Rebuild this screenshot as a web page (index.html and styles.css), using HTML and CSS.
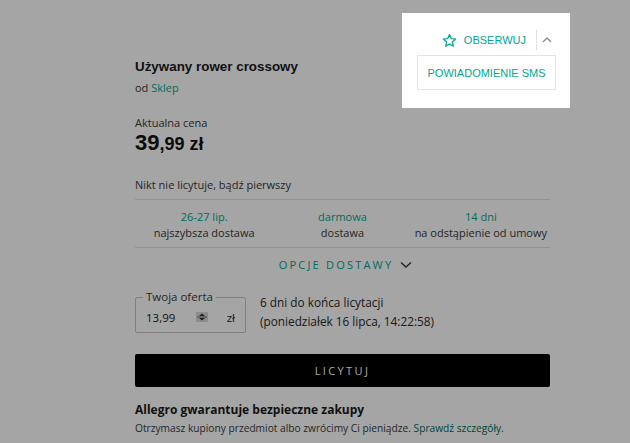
FILE: index.html
```html
<!DOCTYPE html>
<html lang="pl">
<head>
<meta charset="utf-8">
<title>Używany rower crossowy</title>
<link rel="stylesheet" href="styles.css">
</head>
<body>
<main class="offer-page">
  <h1 class="title">Używany rower crossowy</h1>
  <div class="seller">od <a class="link" href="#">Sklep</a></div>

  <div class="price-label">Aktualna cena</div>
  <div class="price"><span class="price-int">39</span><span class="price-frac">,99 zł</span></div>

  <div class="bidders">Nikt nie licytuje, bądź pierwszy</div>

  <div class="facts">
    <div class="fact"><div class="fact-top">26-27 lip.</div><div class="fact-bottom">najszybsza dostawa</div></div>
    <div class="fact"><div class="fact-top">darmowa</div><div class="fact-bottom">dostawa</div></div>
    <div class="fact"><div class="fact-top">14 dni</div><div class="fact-bottom">na odstąpienie od umowy</div></div>
  </div>

  <div class="delivery-options">
    <span>OPCJE DOSTAWY</span>
    <svg class="chev-down" width="12" height="8" viewBox="0 0 12 8"><path d="M1 1.5 L6 6 L11 1.5" fill="none" stroke="currentColor" stroke-width="1.5"/></svg>
  </div>

  <div class="bid-row">
    <div class="bid-box">
      <span class="bid-legend">Twoja oferta</span>
      <span class="bid-value">13,99</span>
      <span class="spinner"><svg width="12" height="10" viewBox="0 0 12 10"><rect x="0" y="0" width="12" height="10" fill="#d8d8d8"/><path d="M3 4 L6 1.5 L9 4 Z M3 6 L6 8.5 L9 6 Z" fill="#333"/><rect x="1" y="4.6" width="10" height="0.8" fill="#555"/></svg></span>
      <span class="bid-cur">zł</span>
    </div>
    <div class="bid-time">6 dni do końca licytacji<br>(poniedziałek 16 lipca, 14:22:58)</div>
  </div>

  <button class="bid-btn">LICYTUJ</button>

  <div class="guarantee-title">Allegro gwarantuje bezpieczne zakupy</div>
  <div class="guarantee-text">Otrzymasz kupiony przedmiot albo zwrócimy Ci pieniądze. <a class="link-dark" href="#">Sprawdź szczegóły.</a></div>
</main>

<div class="overlay"></div>

<div class="popup">
  <div class="popup-head">
    <svg class="star" width="15" height="15" viewBox="0 0 24 24"><path d="M12 2.5 L14.9 8.9 L21.8 9.6 L16.6 14.3 L18.1 21.2 L12 17.6 L5.9 21.2 L7.4 14.3 L2.2 9.6 L9.1 8.9 Z" fill="none" stroke="currentColor" stroke-width="2" stroke-linejoin="round"/></svg>
    <span class="watch">OBSERWUJ</span>
    <span class="divider"></span>
    <svg class="chev-up" width="10" height="6" viewBox="0 0 10 6"><path d="M1 5 L5 1 L9 5" fill="none" stroke="currentColor" stroke-width="1.3"/></svg>
  </div>
  <div class="sms">POWIADOMIENIE SMS</div>
</div>
</body>
</html>
```
FILE: styles.css
```css
* { box-sizing: border-box; }
html, body { margin: 0; padding: 0; background: #fff; }
body {
  width: 630px;
  height: 443px;
  overflow: hidden;
  font-family: "Open Sans", "Liberation Sans", sans-serif;
  color: #3a3a3a;
  position: relative;
}
.offer-page {
  margin-left: 135px;
  width: 415px;
  padding-top: 58px;
}
.title {
  margin: 0;
  font-family: "Liberation Sans", Arial, sans-serif;
  font-weight: 700;
  font-size: 13.4px;
  line-height: 18px;
  color: #1a1a1a;
}
.seller {
  margin-top: 4px;
  font-size: 11px;
  line-height: 16px;
  color: #3a3a3a;
}
.link { color: #00a790; text-decoration: none; }
.link-dark { color: #006b5a; text-decoration: none; }
.price-label {
  margin-top: 19px;
  font-size: 11px;
  line-height: 16px;
  color: #3a3a3a;
}
.price {
  font-family: "Liberation Sans", Arial, sans-serif;
  font-weight: 700;
  line-height: 24px;
  color: #111;
}
.price-int { font-size: 22px; }
.price-frac { font-size: 18px; }
.bidders {
  margin-top: 20px;
  font-size: 11px;
  line-height: 16px;
  padding-bottom: 6px;
  border-bottom: 1px solid #e4e4e4;
}
.facts {
  display: grid;
  grid-template-columns: 1fr 1fr 1fr;
  padding: 9px 0 6px;
  border-bottom: 1px solid #e4e4e4;
  text-align: center;
  font-size: 11px;
  line-height: 16px;
}
.fact-top { color: #00a790; }
.fact-bottom { color: #3a3a3a; }
.delivery-options {
  margin-top: 9px;
  display: flex;
  justify-content: center;
  align-items: center;
  gap: 7px;
  font-size: 11px;
  line-height: 16px;
  letter-spacing: 2.2px;
  color: #00a790;
  padding-left: 6px;
}
.chev-down { color: #3a3a3a; }
.bid-row {
  margin-top: 20px;
  display: flex;
  align-items: flex-start;
  gap: 14px;
}
.bid-box {
  position: relative;
  margin-top: 4px;
  width: 111px;
  height: 36px;
  border: 1px solid #c6c6c6;
  border-radius: 2px;
  display: flex;
  align-items: center;
  padding: 4px 10px 0 10px;
  font-size: 11.5px;
  color: #222;
}
.bid-legend {
  position: absolute;
  left: 7px;
  top: -9px;
  padding: 0 3px;
  background: #fff;
  font-size: 11.5px;
  line-height: 16px;
  color: #3a3a3a;
}
.bid-value { flex: 1; }
.spinner { display: flex; margin-right: 19px; }
.bid-time {
  font-size: 11.8px;
  line-height: 19px;
  color: #2a2a2a;
}
.bid-btn {
  display: block;
  margin-top: 21px;
  width: 415px;
  height: 33px;
  border: 0;
  border-radius: 2px;
  background: #000;
  color: #fff;
  font-family: "Open Sans", sans-serif;
  font-size: 11px;
  letter-spacing: 2.4px;
  cursor: pointer;
}
.guarantee-title {
  margin-top: 14px;
  font-weight: 700;
  font-size: 12px;
  line-height: 18px;
  color: #1a1a1a;
}
.guarantee-text {
  margin-top: 1px;
  font-size: 10.2px;
  line-height: 16px;
  color: #3a3a3a;
}
.overlay {
  position: absolute;
  inset: 0;
  background: rgba(0, 0, 0, 0.353);
}
.popup {
  position: absolute;
  left: 402px;
  top: 13px;
  width: 168px;
  height: 95px;
  background: #fff;
  padding: 17px 14px 0 15px;
  font-family: "Liberation Sans", Arial, sans-serif;
  color: #00a790;
}
.popup-head {
  display: flex;
  align-items: center;
  justify-content: flex-end;
  height: 20px;
  margin-right: 4px;
}
.star { margin-right: 7px; }
.watch { font-size: 11px; }
.divider {
  width: 1px;
  height: 20px;
  background: #e2e2e2;
  margin: 0 5px 0 10px;
}
.chev-up { color: #8a8a8a; }
.sms {
  margin-top: 5px;
  height: 35px;
  border: 1px solid #e4e4e4;
  display: flex;
  align-items: center;
  justify-content: center;
  font-size: 11px;
}
```
